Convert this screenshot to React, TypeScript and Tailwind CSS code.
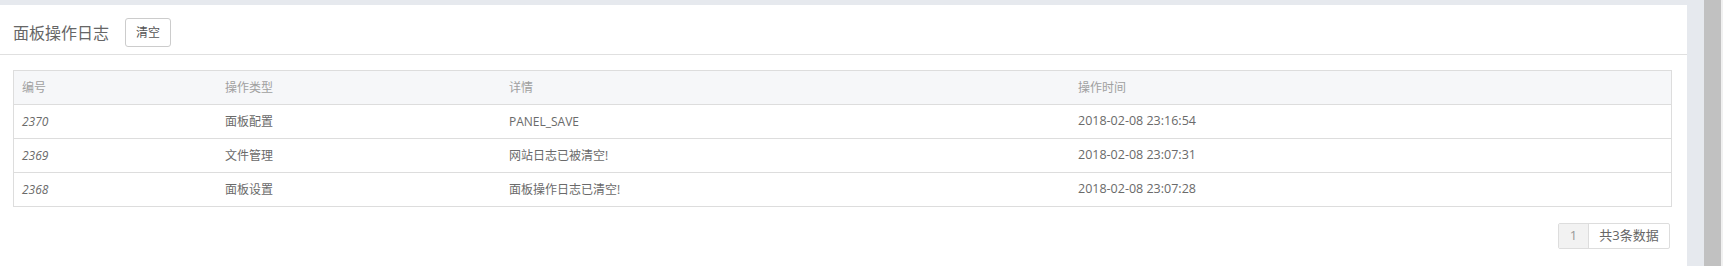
const rows = [
  { id: "2370", type: "面板配置", detail: "PANEL_SAVE", time: "2018-02-08 23:16:54" },
  { id: "2369", type: "文件管理", detail: "网站日志已被清空!", time: "2018-02-08 23:07:31" },
  { id: "2368", type: "面板设置", detail: "面板操作日志已清空!", time: "2018-02-08 23:07:28" },
];

const font = "font-['Open_Sans','Noto_Sans_CJK_SC',sans-serif]";
const cols = "grid grid-cols-[203px_284px_569px_1fr]";

export default function App() {
  return (
    <div className={`flex w-[1723px] h-[266px] bg-[#e6e9ee] ${font}`}>
      {/* Main panel */}
      <div className="w-[1687px] pt-[5px] flex flex-col">
        <div className="flex-1 bg-white flex flex-col">
          {/* Header */}
          <div className="h-[50px] border-b border-[#e0e0e0] flex items-start pt-[13px] pl-[13px]">
            <div className="h-[29px] flex items-center gap-4">
              <span className="text-[16px] leading-none text-[#666]">面板操作日志</span>
              <button className="h-[29px] w-[46px] rounded-[3px] border border-[#ccc] bg-white text-[12px] text-[#555]">
                清空
              </button>
            </div>
          </div>

          {/* Table */}
          <div className="pl-[13px] pr-[15px] pt-[15px]">
            <div className="border border-[#ddd] text-[12px]">
              <div className={`${cols} h-[33px] items-center bg-[#f6f7f9] text-[#a0a0a0]`}>
                <div className="pl-2">编号</div>
                <div className="pl-2">操作类型</div>
                <div className="pl-2">详情</div>
                <div className="pl-2">操作时间</div>
              </div>
              {rows.map((r) => (
                <div key={r.id} className={`${cols} h-[34px] items-center border-t border-[#ddd] text-[#6a6a6a]`}>
                  <div className="pl-2 italic">{r.id}</div>
                  <div className="pl-2">{r.type}</div>
                  <div className="pl-2">{r.detail}</div>
                  <div className="pl-2 text-[12.5px]">{r.time}</div>
                </div>
              ))}
            </div>

            {/* Pagination */}
            <div className="flex justify-end mt-4 mr-[2px]">
              <div className="flex h-[26px] border border-[#ddd] rounded-[2px] text-[13px]">
                <span className="w-[30px] flex items-center justify-center bg-[#f2f2f2] text-[#999] border-r border-[#ddd]">
                  1
                </span>
                <span className="w-[80px] flex items-center justify-center text-[#666]">共3条数据</span>
              </div>
            </div>
          </div>
        </div>
      </div>

      {/* Right gutter + scrollbar */}
      <div className="w-[17px]" />
      <div className="w-[19px] bg-[#f1f1f1] flex">
        <div className="w-[17px] bg-[#c1c1c1]" />
      </div>
    </div>
  );
}
